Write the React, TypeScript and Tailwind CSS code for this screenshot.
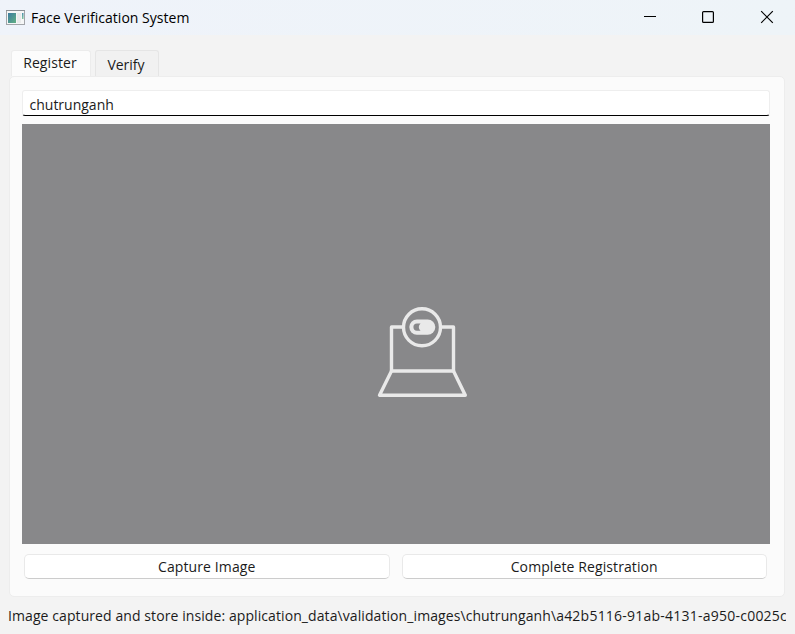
function AppIcon() {
  return (
    <svg width="19" height="16" viewBox="0 0 19 16" className="shrink-0">
      <defs>
        <linearGradient id="screen" x1="0" y1="0" x2="1" y2="1">
          <stop offset="0" stopColor="#3c7ba0" />
          <stop offset="1" stopColor="#62b083" />
        </linearGradient>
        <linearGradient id="bar" x1="0" y1="0" x2="0" y2="1">
          <stop offset="0" stopColor="#4b8fae" />
          <stop offset="1" stopColor="#7fc59a" />
        </linearGradient>
      </defs>
      <rect x="0.5" y="0.5" width="18" height="14" fill="#f5f6f6" stroke="#a2a5a9" />
      <path d="M0 0.5H19" stroke="#8b8f94" />
      <rect x="2" y="3" width="8" height="10" fill="url(#screen)" />
      <rect x="11" y="3" width="4" height="10" fill="#e9eaea" />
      <rect x="16" y="3" width="1.5" height="6" fill="url(#bar)" />
    </svg>
  );
}

function WebcamIcon() {
  return (
    <svg width="91" height="92" viewBox="0 0 91 92" fill="none" stroke="#e9e9e9" strokeWidth="3.4" strokeLinejoin="round">
      <path d="M26 21H14.500V65H76.500V21H64" />
      <path d="M14.500 65L2.500 89.300H88.300L76.500 65" />
      <circle cx="45" cy="21.300" r="18.500" />
      <rect x="32.300" y="13.500" width="26" height="15.200" rx="7.600" fill="#e9e9e9" stroke="none" />
      <path d="M43.500 17.500H40A3.600 3.600 0 0 0 40 24.700H43.500C41.200 22.700 41.200 19.500 43.500 17.500Z" fill="#88888a" stroke="none" />
    </svg>
  );
}

function PushButton({ label }: { label: string }) {
  return (
    <button className="h-[25px] flex-1 rounded-[5px] border border-[#e9e9e9] border-b-[#cccccc] bg-white pt-px text-center leading-[22px] tracking-[0.1px]">
      {label}
    </button>
  );
}

export default function App() {
  return (
    <div className="flex h-[634px] w-[795px] flex-col overflow-hidden bg-[#f3f3f3] font-['Open_Sans','Noto_Sans',sans-serif] text-[14px] text-[#1b1b1b]">
      <header className="flex h-[35px] shrink-0 items-center bg-linear-to-r from-[#eff3fa] to-[#eef4f8] pl-1.5">
        <AppIcon />
        <h1 className="ml-[6px] flex-1 text-[14px] font-normal tracking-[0.03px] text-black">Face Verification System</h1>
        <svg width="151" height="35" viewBox="644 0 151 35" fill="none" stroke="#000">
          <path d="M644 16.500H656" />
          <rect x="702.600" y="11.600" width="10.800" height="10.800" rx="1" strokeWidth="1.200" />
          <path d="M761.200 11.200L772.800 22.800M772.800 11.200L761.200 22.800" strokeWidth="1.200" />
        </svg>
      </header>

      <nav className="mt-[15px] flex h-[26px] shrink-0 gap-1 pl-[11px]">
        <button className="w-[80px] rounded-t-[3px] border border-b-0 border-[#ececec] bg-[#fcfcfc] pb-px pr-0.5 leading-6 tracking-[0.1px]">Register</button>
        <button className="w-[64px] rounded-t-[3px] border border-b-0 border-[#e5e5e5] bg-[#f1f1f1] pr-0.5 pt-0.5 leading-6">Verify</button>
      </nav>

      <main className="mx-[9px] flex h-[521px] w-[776px] shrink-0 flex-col rounded-[5px] border border-[#ededed] bg-[#fbfbfb] px-3 pt-[13px]">
        <div className="flex h-[26px] w-[748px] shrink-0 items-center rounded-[3px] border border-b-[1.500px] border-[#eeeeee] border-b-black bg-white pl-[6.500px] pt-[3px]">
          chutrunganh
        </div>
        <div className="mt-2 h-[420px] w-[748px] shrink-0 bg-[#88888a] pl-[355px] pt-[182px]">
          <WebcamIcon />
        </div>
        <div className="ml-0.5 mt-2.5 flex w-[743px] gap-3">
          <PushButton label="Capture Image" />
          <PushButton label="Complete Registration" />
        </div>
      </main>

      <footer className="ml-2 mt-2 w-[778px] overflow-hidden whitespace-nowrap leading-[22px]">
        <span className="tracking-[0.085px]">Image captured and store inside: application_data\validation_images\chutrunganh\</span>
        <span className="tracking-[0.230px]">a42b5116-91ab-4131-a950-c0025c</span>
      </footer>
    </div>
  );
}
